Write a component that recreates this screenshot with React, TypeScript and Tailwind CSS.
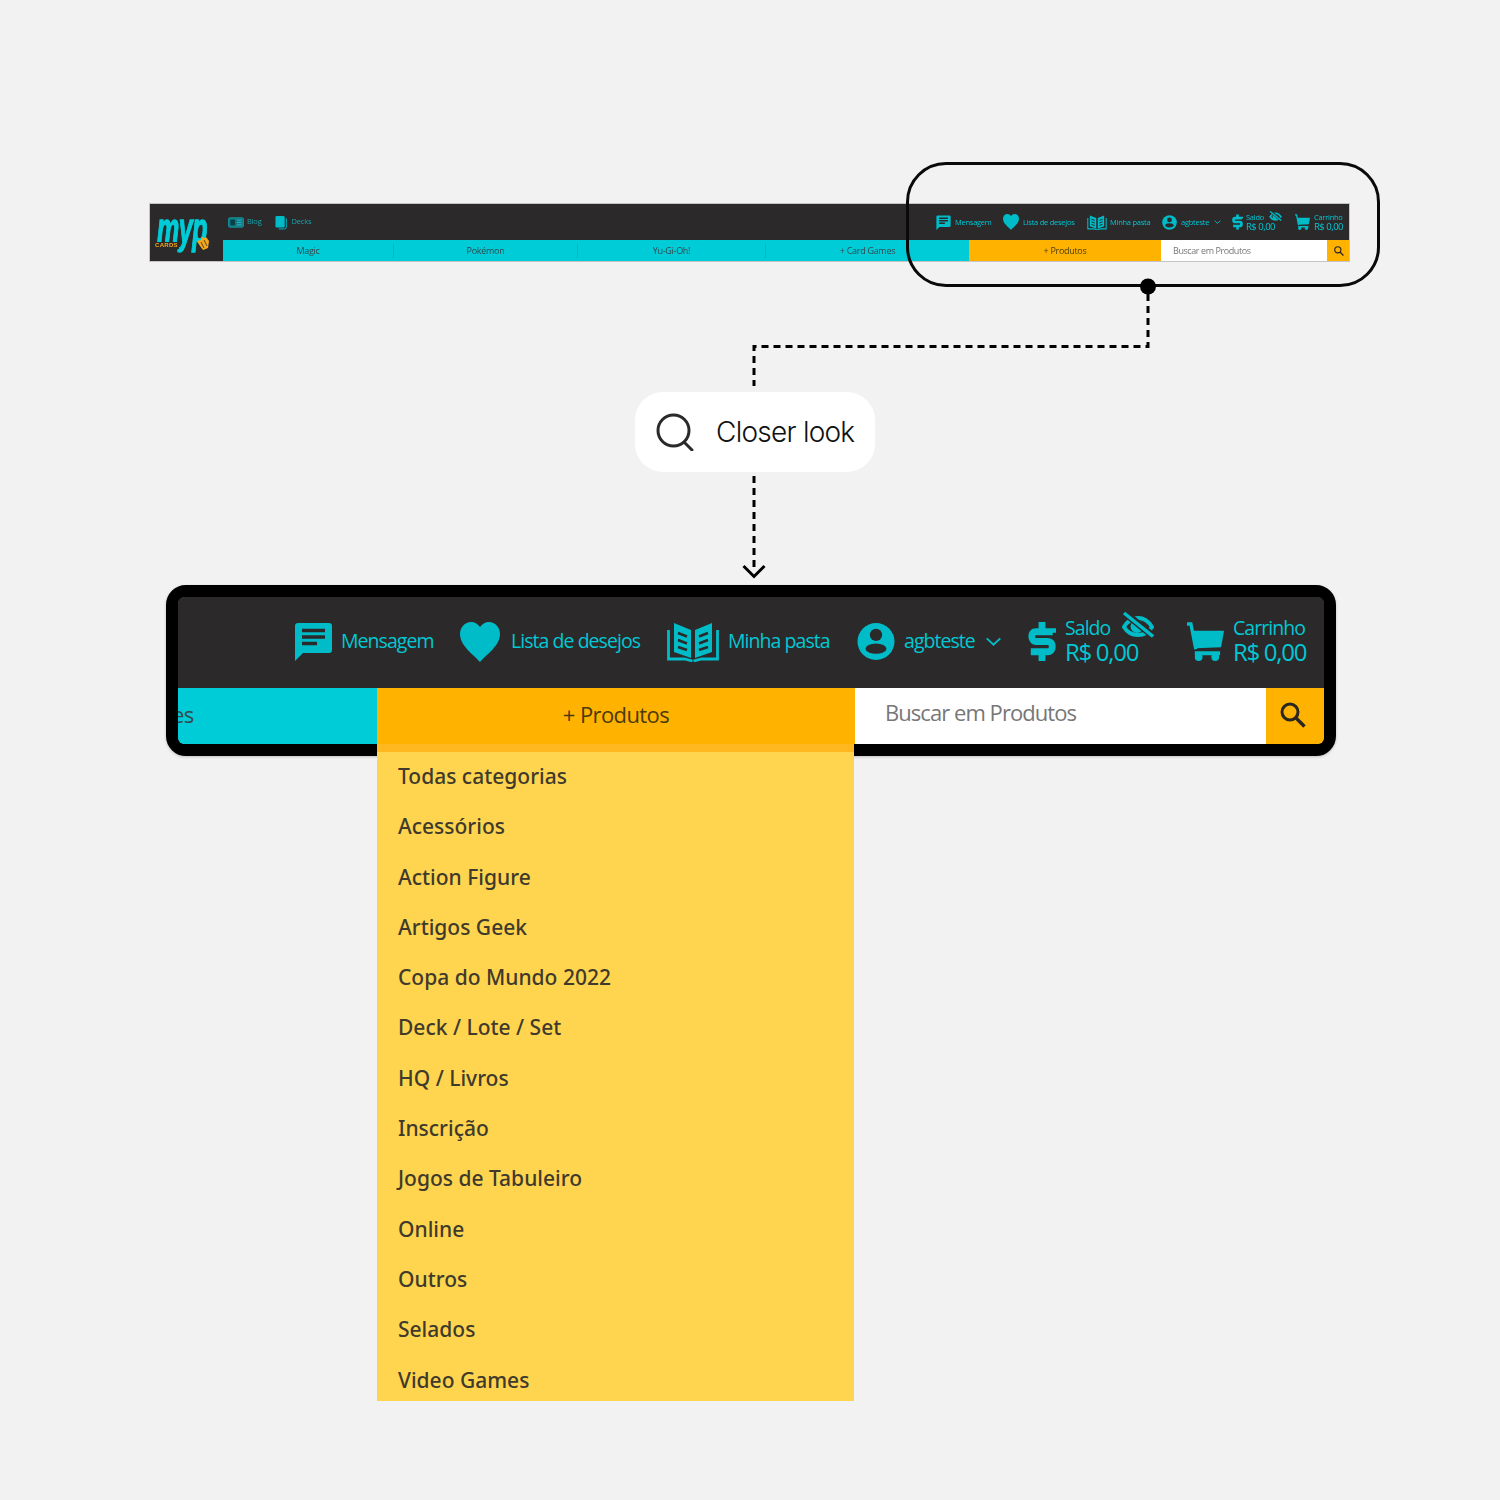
import React from "react";

const CYAN = "#00bcc8";
const DARK = "#2b292a";

function MessageIcon({ className }: { className?: string }) {
  return (
    <svg viewBox="0 0 39 39" className={className}>
      <path d="M4 1h31a3 3 0 0 1 3 3v24a3 3 0 0 1-3 3H9l-8 8V4a3 3 0 0 1 3-3z" fill={CYAN} />
      <path d="M8 8.500h23M8 15h23M8 21.500h15" stroke={DARK} strokeWidth="3.400" fill="none" />
    </svg>
  );
}

function HeartIcon({ className }: { className?: string }) {
  return (
    <svg viewBox="0 0 40 40" className={className}>
      <path d="M20 40C14 33 0 24 0 12 0 5 5 0 11 0c4 0 7 2 9 5 2-3 5-5 9-5 6 0 11 5 11 12 0 12-14 21-20 28z" fill={CYAN} />
    </svg>
  );
}

function BookIcon({ className }: { className?: string }) {
  return (
    <svg viewBox="0 0 52 40" className={className}>
      <path d="M1.500 8v29h16l8 2M50.500 8v29h-16l-8 2" fill="none" stroke={CYAN} strokeWidth="2.800" />
      <path d="M7 1l17 7v28l-17-6zM45 1L28 8v28l17-6z" fill={CYAN} />
      <path d="M11 11l9 3.500M11 18l9 3.500M11 25l9 3M41 11l-9 3.500M41 18l-9 3.500M41 25l-9 3" stroke={DARK} strokeWidth="2.600" fill="none" />
    </svg>
  );
}

function UserIcon({ className }: { className?: string }) {
  return (
    <svg viewBox="0 0 40 40" className={className}>
      <circle cx="20" cy="20" r="19.500" fill={CYAN} />
      <circle cx="20" cy="13" r="6.500" fill={DARK} />
      <ellipse cx="20" cy="27.500" rx="11" ry="5.500" fill={DARK} />
    </svg>
  );
}

function Chevron({ className }: { className?: string }) {
  return (
    <svg viewBox="0 0 18 10" className={className}>
      <path d="M1.500 1.500L9 8.500l7.500-7" fill="none" stroke={CYAN} strokeWidth="2.200" />
    </svg>
  );
}

function DollarIcon({ className }: { className?: string }) {
  return (
    <svg viewBox="0 0 28 42" className={className}>
      <path d="M25 12V11H7.500C5 11 3.500 13 3.500 15.500S5 21 8 21h12c3 0 4.500 2 4.500 5s-1.500 5.500-4.500 5.500H2.500" fill="none" stroke={CYAN} strokeWidth="7" />
      <path d="M14 1v9M14 32v9" stroke={CYAN} strokeWidth="7" fill="none" />
    </svg>
  );
}

function EyeOffIcon({ className }: { className?: string }) {
  return (
    <svg viewBox="0 0 32 26" className={className}>
      <path d="M2 15c3-5 8-9 14-9s11 4 14 9c-3 5-8 8-14 8S5 20 2 15z" fill="none" stroke={CYAN} strokeWidth="4" />
      <circle cx="15" cy="14.500" r="6.500" fill={CYAN} />
      <path d="M3 1l28 23" stroke={DARK} strokeWidth="7" fill="none" />
      <path d="M2 1l29 23.500" stroke={CYAN} strokeWidth="3.400" fill="none" />
    </svg>
  );
}

function CartIcon({ className }: { className?: string }) {
  return (
    <svg viewBox="0 0 38 40" className={className}>
      <path d="M0 2h4l5 26" stroke={CYAN} strokeWidth="3.400" fill="none" />
      <path d="M6 9h32l-3 17-26 1z" fill={CYAN} />
      <path d="M8 30h26v4H8z" fill={CYAN} />
      <circle cx="12" cy="36" r="4" fill={CYAN} />
      <circle cx="29" cy="36" r="4" fill={CYAN} />
    </svg>
  );
}

function SearchIcon({ className }: { className?: string }) {
  return (
    <svg viewBox="0 0 26 26" className={className}>
      <circle cx="10" cy="10" r="8" fill="none" stroke="#2a2620" strokeWidth="3" />
      <path d="M15.500 15.500L24.500 24.500" stroke="#2a2620" strokeWidth="3.400" fill="none" />
    </svg>
  );
}

function BlogIcon({ className }: { className?: string }) {
  return (
    <svg viewBox="0 0 17 11" className={className}>
      <rect x="0.500" y="0.500" width="16" height="10" rx="1.500" fill="#117c86" stroke="#14929c" />
      <rect x="2.500" y="2.500" width="5" height="6" fill="#0a3f45" />
      <path d="M9.500 3h5M9.500 5.500h5M9.500 8h5" stroke="#28b8c2" strokeWidth="1" />
    </svg>
  );
}

function DecksIcon({ className }: { className?: string }) {
  return (
    <svg viewBox="0 0 13 15" className={className}>
      <path d="M12.300 3v9.500a2 2 0 0 1-2 2H4" fill="none" stroke={CYAN} strokeWidth="1" />
      <rect x="0.500" y="0.500" width="10" height="12.500" rx="1.500" fill={CYAN} />
    </svg>
  );
}

function HandIcon({ className }: { className?: string }) {
  return (
    <svg viewBox="0 0 14 14" className={className}>
      <path d="M1 5l4-1 1-3 3 1 1-1 3 4-1 7-5 2-3-4z" fill="#f5a81c" />
      <path d="M5 6l3 6M8 4l3 6" stroke={DARK} strokeWidth="0.800" />
    </svg>
  );
}

const categories = [
  "Todas categorias",
  "Acessórios",
  "Action Figure",
  "Artigos Geek",
  "Copa do Mundo 2022",
  "Deck / Lote / Set",
  "HQ / Livros",
  "Inscrição",
  "Jogos de Tabuleiro",
  "Online",
  "Outros",
  "Selados",
  "Video Games",
];

function SmallNav() {
  return (
    <div className="flex w-[1201px] h-[59px] bg-[#2b292a] ml-[149px] outline outline-1 -outline-offset-1 outline-[#c4c4c4] font-['Open_Sans',sans-serif] blur-[0.35px]">
      <div className="relative w-[74px] shrink-0">
        <span className="absolute left-[8px] top-[11px] origin-top text-[25px] leading-[16px] font-['Liberation_Sans',sans-serif] font-bold italic text-[#00ccd8] tracking-[-0.500px] scale-y-[1.7] [-webkit-text-stroke:0.8px_#00ccd8]">
          myp
        </span>
        <span className="absolute left-[6px] top-[39px] text-[6px] leading-[7px] font-['Liberation_Sans',sans-serif] font-bold text-[#f5a81c] tracking-[0.300px] bg-[#2b292a] pr-[1px]">
          CARDS
        </span>
        <HandIcon className="absolute left-[47px] top-[33px] w-[14px] h-[14px]" />
      </div>
      <div className="flex flex-col flex-1">
        <div className="flex items-center h-[37px] pt-[1px]">
          <div className="flex items-center ml-[5px]">
            <BlogIcon className="w-[16px] h-[11px]" />
            <span className="ml-[3px] text-[7.500px] text-[#1aa3ad] tracking-[-0.200px]">Blog</span>
          </div>
          <div className="flex items-center ml-[13px]">
            <DecksIcon className="w-[12px] h-[15px]" />
            <span className="ml-[5px] text-[7.500px] text-[#1aa3ad] tracking-[-0.200px]">Decks</span>
          </div>
          <div className="flex items-center ml-auto pr-[7px] text-[7.500px] leading-[9px] font-medium text-[#00c8d4] tracking-[-0.250px]">
            <MessageIcon className="w-[15px] h-[15px]" />
            <span className="ml-[4px] w-[37px] whitespace-nowrap">Mensagem</span>
            <HeartIcon className="ml-[11px] w-[16px] h-[16px]" />
            <span className="ml-[4px] w-[53px] whitespace-nowrap">Lista de desejos</span>
            <BookIcon className="ml-[11px] w-[20px] h-[15px]" />
            <span className="ml-[3px] w-[41px] whitespace-nowrap">Minha pasta</span>
            <UserIcon className="ml-[11px] w-[15px] h-[15px]" />
            <span className="ml-[4px] w-[30px] whitespace-nowrap">agbteste</span>
            <Chevron className="ml-[3px] w-[7px] h-[4px]" />
            <DollarIcon className="ml-[11px] w-[11px] h-[16px]" />
            <div className="relative ml-[3px] w-[30px] flex flex-col">
              <span className="text-[7.500px] leading-[9px] whitespace-nowrap">Saldo</span>
              <span className="text-[9.500px] leading-[10px] whitespace-nowrap tracking-[-0.500px]">R$ 0,00</span>
              <EyeOffIcon className="absolute left-[23px] -top-[2px] w-[13px] h-[10px]" />
            </div>
            <CartIcon className="ml-[19px] w-[15px] h-[16px]" />
            <div className="ml-[4px] w-[29px] flex flex-col">
              <span className="text-[7.500px] leading-[9px] whitespace-nowrap">Carrinho</span>
              <span className="text-[9.500px] leading-[10px] whitespace-nowrap tracking-[-0.500px]">R$ 0,00</span>
            </div>
          </div>
        </div>
        <div className="flex h-[21px] text-[9px] text-[#33494c] tracking-[-0.300px]">
          <div className="flex w-[746px] items-center bg-[#00ccd8] text-center">
            <div className="w-[171px] h-[14px] leading-[14px] border-r border-[#22a8b0]">Magic</div>
            <div className="w-[184px] h-[14px] leading-[14px] border-r border-[#22a8b0]">Pokémon</div>
            <div className="w-[188px] h-[14px] leading-[14px] border-r border-[#22a8b0]">Yu-Gi-Oh!</div>
            <div className="w-[203px] h-[14px] leading-[14px]">+ Card Games</div>
          </div>
          <div className="flex w-[192px] items-center justify-center bg-[#ffb300] text-[#4a3a10]">+ Produtos</div>
          <div className="flex w-[166px] items-center bg-white pl-[12px] text-[#777777] tracking-[-0.420px]">Buscar em Produtos</div>
          <div className="flex flex-1 items-center justify-center bg-[#ffb300]">
            <SearchIcon className="w-[10px] h-[10px]" />
          </div>
        </div>
      </div>
    </div>
  );
}

function BigNav() {
  return (
    <div className="relative ml-[166px] w-[1170px] h-[171px] border-[12px] border-black rounded-[20px] shadow-[0_1px_3px_rgba(0,0,0,0.2)] font-['Open_Sans',sans-serif]">
      <div className="flex flex-col h-full rounded-[6px] overflow-hidden">
        <div className="flex items-center h-[91px] bg-[#2b292a] pl-[116px] pb-[2px] text-[19.500px] font-medium text-[#00c8d4] tracking-[-0.950px]">
          <MessageIcon className="w-[39px] h-[39px]" />
          <span className="ml-[8px] w-[91px] whitespace-nowrap leading-[24px] pb-[2px]">Mensagem</span>
          <HeartIcon className="ml-[28px] w-[40px] h-[40px]" />
          <span className="ml-[11px] w-[129px] whitespace-nowrap leading-[24px] pb-[2px]">Lista de desejos</span>
          <BookIcon className="ml-[27px] w-[52px] h-[40px]" />
          <span className="ml-[9px] w-[102px] whitespace-nowrap leading-[24px] pb-[2px]">Minha pasta</span>
          <UserIcon className="ml-[27px] w-[38px] h-[39px]" />
          <span className="ml-[9px] w-[72px] whitespace-nowrap leading-[24px] pb-[2px]">agbteste</span>
          <Chevron className="ml-[9px] w-[17px] h-[9px]" />
          <DollarIcon className="ml-[26px] w-[28px] h-[41px]" />
          <div className="relative ml-[9px] w-[74px] flex flex-col pb-[3px]">
            <span className="text-[19.500px] leading-[24px] whitespace-nowrap">Saldo</span>
            <span className="text-[24px] leading-[24px] whitespace-nowrap tracking-[-1.300px]">R$ 0,00</span>
            <EyeOffIcon className="absolute left-[57px] -top-[4px] w-[32px] h-[26px]" />
          </div>
          <CartIcon className="ml-[48px] w-[37px] h-[39px]" />
          <div className="ml-[9px] w-[74px] flex flex-col pb-[3px]">
            <span className="text-[19.500px] leading-[24px] whitespace-nowrap">Carrinho</span>
            <span className="text-[24px] leading-[24px] whitespace-nowrap tracking-[-1.300px]">R$ 0,00</span>
          </div>
        </div>
        <div className="flex h-[56px] text-[22px] tracking-[-0.600px]">
          <div className="flex w-[199px] items-center bg-[#00ccd8] text-[#33494c] overflow-hidden pb-[4px]">
            <span className="-ml-[6px]">es</span>
          </div>
          <div className="flex w-[478px] items-center justify-center bg-[#ffb300] text-[#4a3a10] pb-[4px]">+ Produtos</div>
          <div className="flex w-[411px] items-center bg-white pl-[30px] pb-[8px] text-[#777777] tracking-[-0.950px]">Buscar em Produtos</div>
          <div className="flex flex-1 items-center justify-center bg-[#ffb300] pr-[5px] pb-[3px]">
            <SearchIcon className="w-[26px] h-[26px]" />
          </div>
        </div>
      </div>
      <ul className="absolute left-[199px] top-[147px] w-[477px] h-[657px] border-t-[8px] border-[#ffb81f] bg-[#ffd54f] pl-[21px] font-['Noto_Sans',sans-serif] font-medium text-[21px] text-[#403a2c]">
        {categories.map((c) => (
          <li key={c} className="h-[50.300px] leading-[48px] whitespace-nowrap">
            {c}
          </li>
        ))}
      </ul>
    </div>
  );
}

export default function App() {
  return (
    <div className="relative w-[1500px] h-[1500px] bg-[#f2f2f2] overflow-hidden pt-[203px]">
      <SmallNav />
      <div className="absolute left-[906px] top-[162px] w-[474px] h-[125px] border-[3px] border-[#0a0a0a] rounded-[40px]" />
      <svg className="absolute inset-0 w-[1500px] h-[1500px]" viewBox="0 0 1500 1500">
        <circle cx="1148" cy="286.500" r="8" fill="#000" />
        <path d="M1148 294V346.500H754V386" fill="none" stroke="#000" strokeWidth="3" strokeDasharray="7 5" />
        <path d="M754 476V572" fill="none" stroke="#000" strokeWidth="3" strokeDasharray="7 5" />
        <path d="M743.500 566L754 576.500L764.500 566" fill="none" stroke="#000" strokeWidth="3" />
      </svg>
      <div className="relative flex items-center ml-[635px] mt-[130px] w-[240px] h-[80px] bg-white rounded-[28px] pl-[21px]">
        <svg viewBox="0 0 38 38" className="w-[38px] h-[38px]">
          <circle cx="17.500" cy="17.500" r="15.500" fill="none" stroke="#2a2a2a" strokeWidth="3" />
          <path d="M28 29l8 8" stroke="#2a2a2a" strokeWidth="3" strokeLinecap="round" fill="none" />
        </svg>
        <span className="ml-[22px] font-['Inter',sans-serif] text-[28px] font-light tracking-[-0.750px] text-[#111111] whitespace-nowrap">Closer look</span>
      </div>
      <div className="mt-[113px]">
        <BigNav />
      </div>
    </div>
  );
}
